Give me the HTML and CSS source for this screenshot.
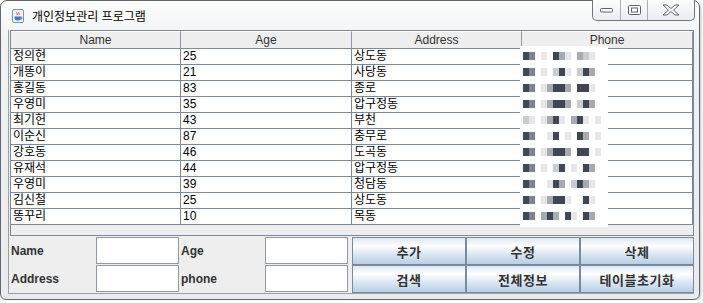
FILE: index.html
```html
<!DOCTYPE html>
<html lang="ko">
<head>
  <meta charset="UTF-8">
  <title>개인정보관리 프로그램</title>
  <link rel="stylesheet" href="styles.css">
</head>
<body>
  <div class="window">
    <!-- 타이틀 바 -->
    <div class="titlebar">
      <svg class="app-icon" width="16" height="16" viewBox="0 0 16 16">
        <rect x="2.5" y="1.5" width="11" height="13" rx="1.5" fill="#eef4fb" stroke="#7892b4"/>
        <path d="M7 4 C6 5 8 6 7 7 M9 4 C8 5 10 6 9 7" stroke="#d0502a" fill="none"/>
        <path d="M4.5 8.5 H11 V10.5 C11 12 9.5 12.5 7.7 12.5 C6 12.5 4.5 12 4.5 10.5 Z" fill="#4f7ab0"/>
        <path d="M11 9 C12.5 9 12.5 11 11 11" stroke="#4f7ab0" fill="none"/>
      </svg>
      <span class="title">개인정보관리 프로그램</span>
      <div class="controls">
        <div class="ctl">
          <svg width="13" height="5" viewBox="0 0 13 5"><rect x="0.5" y="0.5" width="12" height="3.5" rx="1" fill="#fff" stroke="#5d6168"/></svg>
        </div>
        <div class="ctl">
          <svg width="13" height="10" viewBox="0 0 13 10"><rect x="0.5" y="0.5" width="12" height="9" rx="1" fill="#fff" stroke="#5d6168"/><rect x="3.5" y="3" width="6" height="4" fill="#fff" stroke="#5d6168"/></svg>
        </div>
        <div class="ctl close">
          <svg width="20" height="12" viewBox="0 0 20 12"><path d="M2 1 H6 L10 4.5 L14 1 H18 L12.5 6 L18 11 H14 L10 7.5 L6 11 H2 L7.5 6 Z" fill="#fff" stroke="#5d6168" stroke-linejoin="round"/></svg>
        </div>
      </div>
    </div>

    <div class="client">
      <!-- 테이블 -->
      <div class="scroll">
        <table class="grid">
          <colgroup><col class="w170"><col class="w171"><col class="w170"><col class="w171"></colgroup>
          <thead>
            <tr><th>Name</th><th>Age</th><th>Address</th><th>Phone</th></tr>
          </thead>
          <tbody>
            <tr><td>정의현</td><td>25</td><td>상도동</td><td></td></tr>
            <tr><td>개똥이</td><td>21</td><td>사당동</td><td></td></tr>
            <tr><td>홍길동</td><td>83</td><td>종로</td><td></td></tr>
            <tr><td>우영미</td><td>35</td><td>압구정동</td><td></td></tr>
            <tr><td>최기헌</td><td>43</td><td>부천</td><td></td></tr>
            <tr><td>이순신</td><td>87</td><td>충무로</td><td></td></tr>
            <tr><td>강호동</td><td>46</td><td>도곡동</td><td></td></tr>
            <tr><td>유재석</td><td>44</td><td>압구정동</td><td></td></tr>
            <tr><td>우영미</td><td>39</td><td>청담동</td><td></td></tr>
            <tr><td>김신철</td><td>25</td><td>상도동</td><td></td></tr>
            <tr><td>똥꾸리</td><td>10</td><td>목동</td><td></td></tr>
          </tbody>
        </table>
        <!-- 전화번호 모자이크 -->
        <div class="mosaic" id="mosaic"></div>
      </div>

      <!-- 입력 폼 + 버튼 -->
      <div class="form">
        <div class="fields">
          <label>Name</label><input type="text">
          <label>Age</label><input type="text">
          <label>Address</label><input type="text">
          <label>phone</label><input type="text">
        </div>
        <div class="buttons">
          <button>추가</button>
          <button>수정</button>
          <button>삭제</button>
          <button>검색</button>
          <button>전체정보</button>
          <button>테이블초기화</button>
        </div>
      </div>
    </div>
  </div>

  <script>
    // 모자이크 패턴 (D 진함, d, m, g, l 연함, p 분홍, . 흰색)
    const rows = [
      "Dd.p.Dml.mgl..",
      "Dd.l.gDl.gDm..",
      "Dd.lmDDm.DDl..",
      "Dd.lmDDm.gDm..",
      "gl.lmDl.mDl.l.",
      "Dd..lD.l.Dm.l.",
      "Dd.lmDDm.DD.l.",
      "Dd.l.gD.l.Dm..",
      "Dd..lDm.gDml..",
      "Dd.lmDDl..Dl..",
      "Dd.mDm.Dl.Dm.."
    ];
    const box = document.getElementById('mosaic');
    rows.forEach(p => {
      const row = document.createElement('div');
      row.className = 'm-row';
      for (const ch of p) {
        const cell = document.createElement('i');
        cell.className = ch === '.' ? 'c-w' : 'c-' + ch;
        row.appendChild(cell);
      }
      box.appendChild(row);
    });
  </script>
</body>
</html>
```

FILE: styles.css
```css
* { box-sizing: border-box; }

body {
  margin: 0;
  background: #fff;
  font-family: "Liberation Sans", "Noto Sans CJK KR", sans-serif;
}

/* 창 프레임 */
.window {
  width: 700px;
  height: 300px;
  border: 1px solid #62676e;
  border-radius: 7px 7px 6px 6px;
  padding: 0 5px 5px 7px;
  background: linear-gradient(#fdfdfd, #f0f2f4 40px, #e9ebee);
  box-shadow: 1px 1px 3px rgba(0, 0, 0, 0.25);
  display: flex;
  flex-direction: column;
}

.titlebar {
  height: 29px;
  display: flex;
  align-items: flex-start;
}
.app-icon { margin: 7px 0 0 2px; }
.title {
  margin: 7px 0 0 6px;
  font-family: "Noto Sans CJK KR", sans-serif;
  font-size: 12px;
  line-height: 16px;
  color: #000;
}

.controls {
  margin: -1px -1px 0 auto;
  height: 21px;
  display: flex;
  border: 1px solid #70757c;
  border-top: none;
  border-radius: 0 0 5px 5px;
  background: linear-gradient(#fdfdfd, #e9edf2);
  overflow: hidden;
}
.ctl {
  width: 28px;
  display: flex;
  align-items: center;
  justify-content: center;
  border-right: 1px solid #a9afb6;
}
.ctl:nth-child(2) { width: 27px; }
.ctl.close { width: 46px; border-right: none; }

/* 클라이언트 영역 */
.client {
  flex: 1;
  display: flex;
  flex-direction: column;
  background: #eeeeee;
  border-left: 1px solid #9aa0a6;
  border-bottom: 1px solid #9aa0a6;
  padding-left: 1px;
}

.scroll {
  height: 206px;
  border: 1px solid #7a8a99;
  background: #eeeeee;
  position: relative;
  overflow: hidden;
}

.grid {
  width: 682px;
  table-layout: fixed;
  border-collapse: separate;
  border-spacing: 0;
  font-size: 12px;
}
.w170 { width: 170px; }
.w171 { width: 171px; }

.grid th {
  height: 18px;
  padding: 0;
  font-weight: normal;
  color: #333;
  background: #eeeeee;
  border-right: 1px solid #8e99a5;
  border-bottom: 1px solid #7a8a99;
  border-top: 1px solid #fff;
  line-height: 16px;
  text-align: center;
}
.grid td {
  height: 16px;
  padding: 0 2px;
  line-height: 15px;
  color: #000;
  background: #fff;
  border-right: 1px solid #7a8a99;
  border-bottom: 1px solid #7a8a99;
  white-space: nowrap;
  overflow: hidden;
}

/* 모자이크 덮개 */
.mosaic {
  position: absolute;
  left: 509px;
  top: 15px;
  width: 88px;
  height: 181px;
  background: #fff;
  padding: 3px 0 0 3px;
}
.m-row {
  height: 16px;
  padding-top: 3px;
  display: flex;
}
.m-row i { width: 6px; height: 8px; display: block; }
.c-D { background: #3f4654; }
.c-d { background: #7d8390; }
.c-m { background: #a7abb2; }
.c-g { background: #c9ccd1; }
.c-l { background: #e5e7ea; }
.c-p { background: #efe5ea; }
.c-w { background: #fff; }

/* 폼 */
.form {
  margin-top: 1px;
  display: flex;
}
.fields {
  width: 340px;
  display: grid;
  grid-template-columns: repeat(4, 85px);
  grid-template-rows: 28px 28px;
}
.fields label {
  align-self: center;
  padding-left: 1px;
  font-size: 12px;
  font-weight: bold;
  color: #333;
}
.fields input {
  height: 27px;
  margin: 0 1px;
  border: 1px solid #8e9aa6;
  background: #fff;
  padding: 0 2px;
  font-size: 12px;
}
.fields input:nth-of-type(2),
.fields input:nth-of-type(4) { margin: 0 2px 0 0; }

.buttons {
  margin-left: 2px;
  width: 342px;
  display: grid;
  grid-template-columns: repeat(3, 114px);
  grid-template-rows: 28px 28px;
}
.buttons button {
  margin: 0;
  padding: 0;
  border: 1px solid #7a8a99;
  background: linear-gradient(#dde8f3, #ffffff 30%, #dde8f3 60%, #b8cfe5);
  font-family: "Noto Sans CJK KR", sans-serif;
  font-size: 13px;
  font-weight: bold;
  letter-spacing: 0.5px;
  color: #333;
}
```
